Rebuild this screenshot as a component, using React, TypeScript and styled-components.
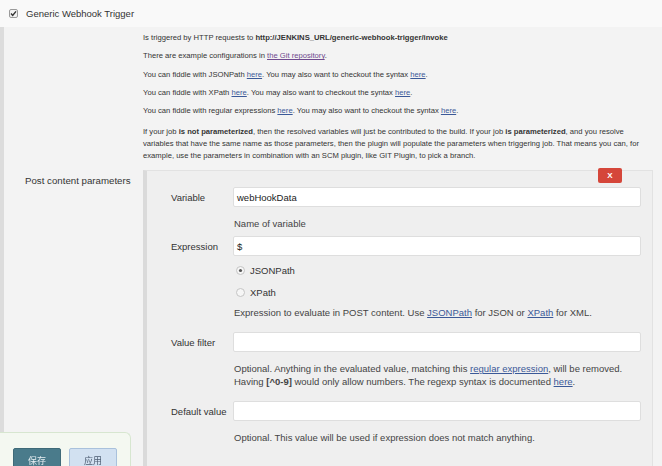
import styled, { createGlobalStyle } from "styled-components";
import { FC } from "react";

const GlobalStyle = createGlobalStyle`
   html, body {
      margin: 0;
      padding: 0;
      background: #f3f3f3;
      font-family: "Liberation Sans", Arial, "Noto Sans CJK SC", sans-serif;
      color: #333;
      overflow: hidden;
   }
`;

const CheckBox: FC = () => (
   <svg width="9" height="9" viewBox="0 0 9 9">
      <rect x="0.5" y="0.5" width="8" height="8" rx="1.5" fill="#f2f2f2" stroke="#9a9a9a" />
      <path d="M2 4.6 L3.7 6.4 L7 2.4" fill="none" stroke="#333" strokeWidth="1.4" />
   </svg>
);

const Radio: FC<{ checked?: boolean }> = ({ checked }) => (
   <svg width="9" height="9" viewBox="0 0 9 9">
      <circle cx="4.5" cy="4.5" r="4" fill="#f6f6f6" stroke="#c4c4c4" />
      {checked && <circle cx="4.5" cy="4.5" r="1.6" fill="#555" />}
   </svg>
);

type FieldProps = {
   label: string;
   value?: string;
};

const Field: FC<FieldProps> = (props) => {
   return (
      <FieldRow>
         <FieldLabel>{props.label}</FieldLabel>
         <Input>{props.value}</Input>
      </FieldRow>
   );
};

export default function App() {
   return (
      <>
         <GlobalStyle />
         <HeaderStyle>
            <CheckBox />
            <span>Generic Webhook Trigger</span>
         </HeaderStyle>
         <SectionStyle>
            <Description>
               <p>
                  Is triggered by HTTP requests to{" "}
                  <b>http://JENKINS_URL/generic-webhook-trigger/invoke</b>
               </p>
               <p>
                  There are example configurations in{" "}
                  <DocLink $visited>the Git repository</DocLink>.
               </p>
               <p>
                  You can fiddle with JSONPath <DocLink>here</DocLink>. You may also want to
                  checkout the syntax <DocLink>here</DocLink>.
               </p>
               <p>
                  You can fiddle with XPath <DocLink>here</DocLink>. You may also want to checkout
                  the syntax <DocLink>here</DocLink>.
               </p>
               <p>
                  You can fiddle with regular expressions <DocLink>here</DocLink>. You may also
                  want to checkout the syntax <DocLink>here</DocLink>.
               </p>
               <LongPara>
                  If your job <b>is not parameterized</b>, then the resolved variables will just be
                  contributed to the build. If your job <b>is parameterized</b>, and you resolve
                  variables that have the same name as those parameters, then the plugin will
                  populate the parameters when triggering job. That means you can, for example,
                  use the parameters in combination with an SCM plugin, like GIT Plugin, to pick
                  a branch.
               </LongPara>
            </Description>
            <ParamRow>
               <ParamLabel>Post content parameters</ParamLabel>
               <Panel>
                  <PanelTop>
                     <DeleteButton>X</DeleteButton>
                  </PanelTop>
                  <Field label="Variable" value="webHookData" />
                  <Help $top={10} $bottom={6}>Name of variable</Help>
                  <Field label="Expression" value="$" />
                  <RadioList>
                     <RadioRow>
                        <Radio checked />
                        <span>JSONPath</span>
                     </RadioRow>
                     <RadioRow>
                        <Radio />
                        <span>XPath</span>
                     </RadioRow>
                  </RadioList>
                  <Help $top={3} $bottom={13}>
                     Expression to evaluate in POST content. Use <DocLink>JSONPath</DocLink> for
                     JSON or <DocLink>XPath</DocLink> for XML.
                  </Help>
                  <Field label="Value filter" />
                  <Help $top={10} $bottom={13}>
                     Optional. Anything in the evaluated value, matching this{" "}
                     <DocLink>regular expression</DocLink>, will be removed.
                     <br />
                     Having <b>[^0-9]</b> would only allow numbers. The regexp syntax is
                     documented <DocLink>here</DocLink>.
                  </Help>
                  <Field label="Default value" />
                  <Help $top={10} $bottom={40}>
                     Optional. This value will be used if expression does not match anything.
                  </Help>
               </Panel>
            </ParamRow>
         </SectionStyle>
         <BottomBar>
            <SaveButton $primary>保存</SaveButton>
            <SaveButton>应用</SaveButton>
         </BottomBar>
      </>
   );
}

const HeaderStyle = styled.div`
   display: flex;
   align-items: center;
   gap: 8px;
   height: 27px;
   padding-left: 9px;
   background: #f9f9f9;
   font-size: 9.5px;
   color: #333;
`;

const SectionStyle = styled.div`
   border-left: 4px solid #dcdcdc;
   padding: 5px 9px 0 0;
   min-height: 500px;
`;

const Description = styled.div`
   padding-left: 139px;
   max-width: 500px;
   font-size: 7.65px;
   line-height: 12px;
   color: #333;

   p {
      margin: 0 0 6.3px;
   }
`;

const LongPara = styled.p`
   && {
      margin-top: 9px;
   }
`;

const DocLink = styled.a<{ $visited?: boolean }>`
   color: ${(p) => (p.$visited ? "#6f4a8e" : "#3b5998")};
   text-decoration: underline;
   cursor: pointer;
`;

const ParamRow = styled.div`
   display: flex;
   margin-top: 8px;
`;

const ParamLabel = styled.div`
   width: 118px;
   padding-left: 21px;
   padding-top: 4px;
   font-size: 9.7px;
   line-height: 14px;
`;

const Panel = styled.div`
   flex: 1;
   background: #efefef;
   border: 1px solid #e2e2e2;
   border-left: 4px solid #dadada;
   padding: 0 11px 0 24px;
   font-size: 9.5px;
`;

const PanelTop = styled.div`
   display: flex;
   justify-content: flex-end;
   margin-top: -3px;
   padding-right: 19px;
   height: 19px;
`;

const DeleteButton = styled.div`
   width: 24px;
   height: 15px;
   display: flex;
   align-items: center;
   justify-content: center;
   background: #d5463a;
   border-radius: 2px;
   color: #fff;
   font-size: 8px;
   font-weight: bold;
`;

const FieldRow = styled.div`
   display: flex;
   align-items: center;
   height: 20px;
`;

const FieldLabel = styled.div`
   width: 62px;
   flex-shrink: 0;
`;

const Input = styled.div`
   flex: 1;
   box-sizing: border-box;
   height: 20px;
   display: flex;
   align-items: center;
   padding-left: 3px;
   background: #fff;
   border: 1px solid #dedede;
   border-radius: 2px;
   font-size: 9.5px;
   color: #222;
`;

const Help = styled.div<{ $top: number; $bottom: number }>`
   margin: ${(p) => p.$top}px 0 ${(p) => p.$bottom}px 63px;
   line-height: 13px;
   color: #444;
   white-space: nowrap;
`;

const RadioList = styled.div`
   display: flex;
   flex-direction: column;
   margin: 3px 0 0 65px;
`;

const RadioRow = styled.div`
   display: flex;
   align-items: center;
   gap: 5px;
   height: 22px;
`;

const BottomBar = styled.div`
   position: fixed;
   left: 0;
   bottom: 0;
   width: 131px;
   height: 34px;
   box-sizing: border-box;
   display: flex;
   gap: 8px;
   padding: 15px 0 0 13px;
   background: #f4f8f1;
   border: 1px solid #d7e6d0;
   border-left: none;
   border-bottom: none;
   border-top-right-radius: 6px;
`;

const SaveButton = styled.div<{ $primary?: boolean }>`
   width: 48px;
   height: 24px;
   box-sizing: border-box;
   display: flex;
   justify-content: center;
   padding-top: 5px;
   border-radius: 2px;
   font-size: 9px;
   font-family: "Noto Sans CJK SC", sans-serif;
   background: ${(p) => (p.$primary ? "#4a7b8b" : "#d2e1f1")};
   border: 1px solid ${(p) => (p.$primary ? "#3f6a78" : "#a9c1dc")};
   color: ${(p) => (p.$primary ? "#e6eef2" : "#4d5d72")};
`;
